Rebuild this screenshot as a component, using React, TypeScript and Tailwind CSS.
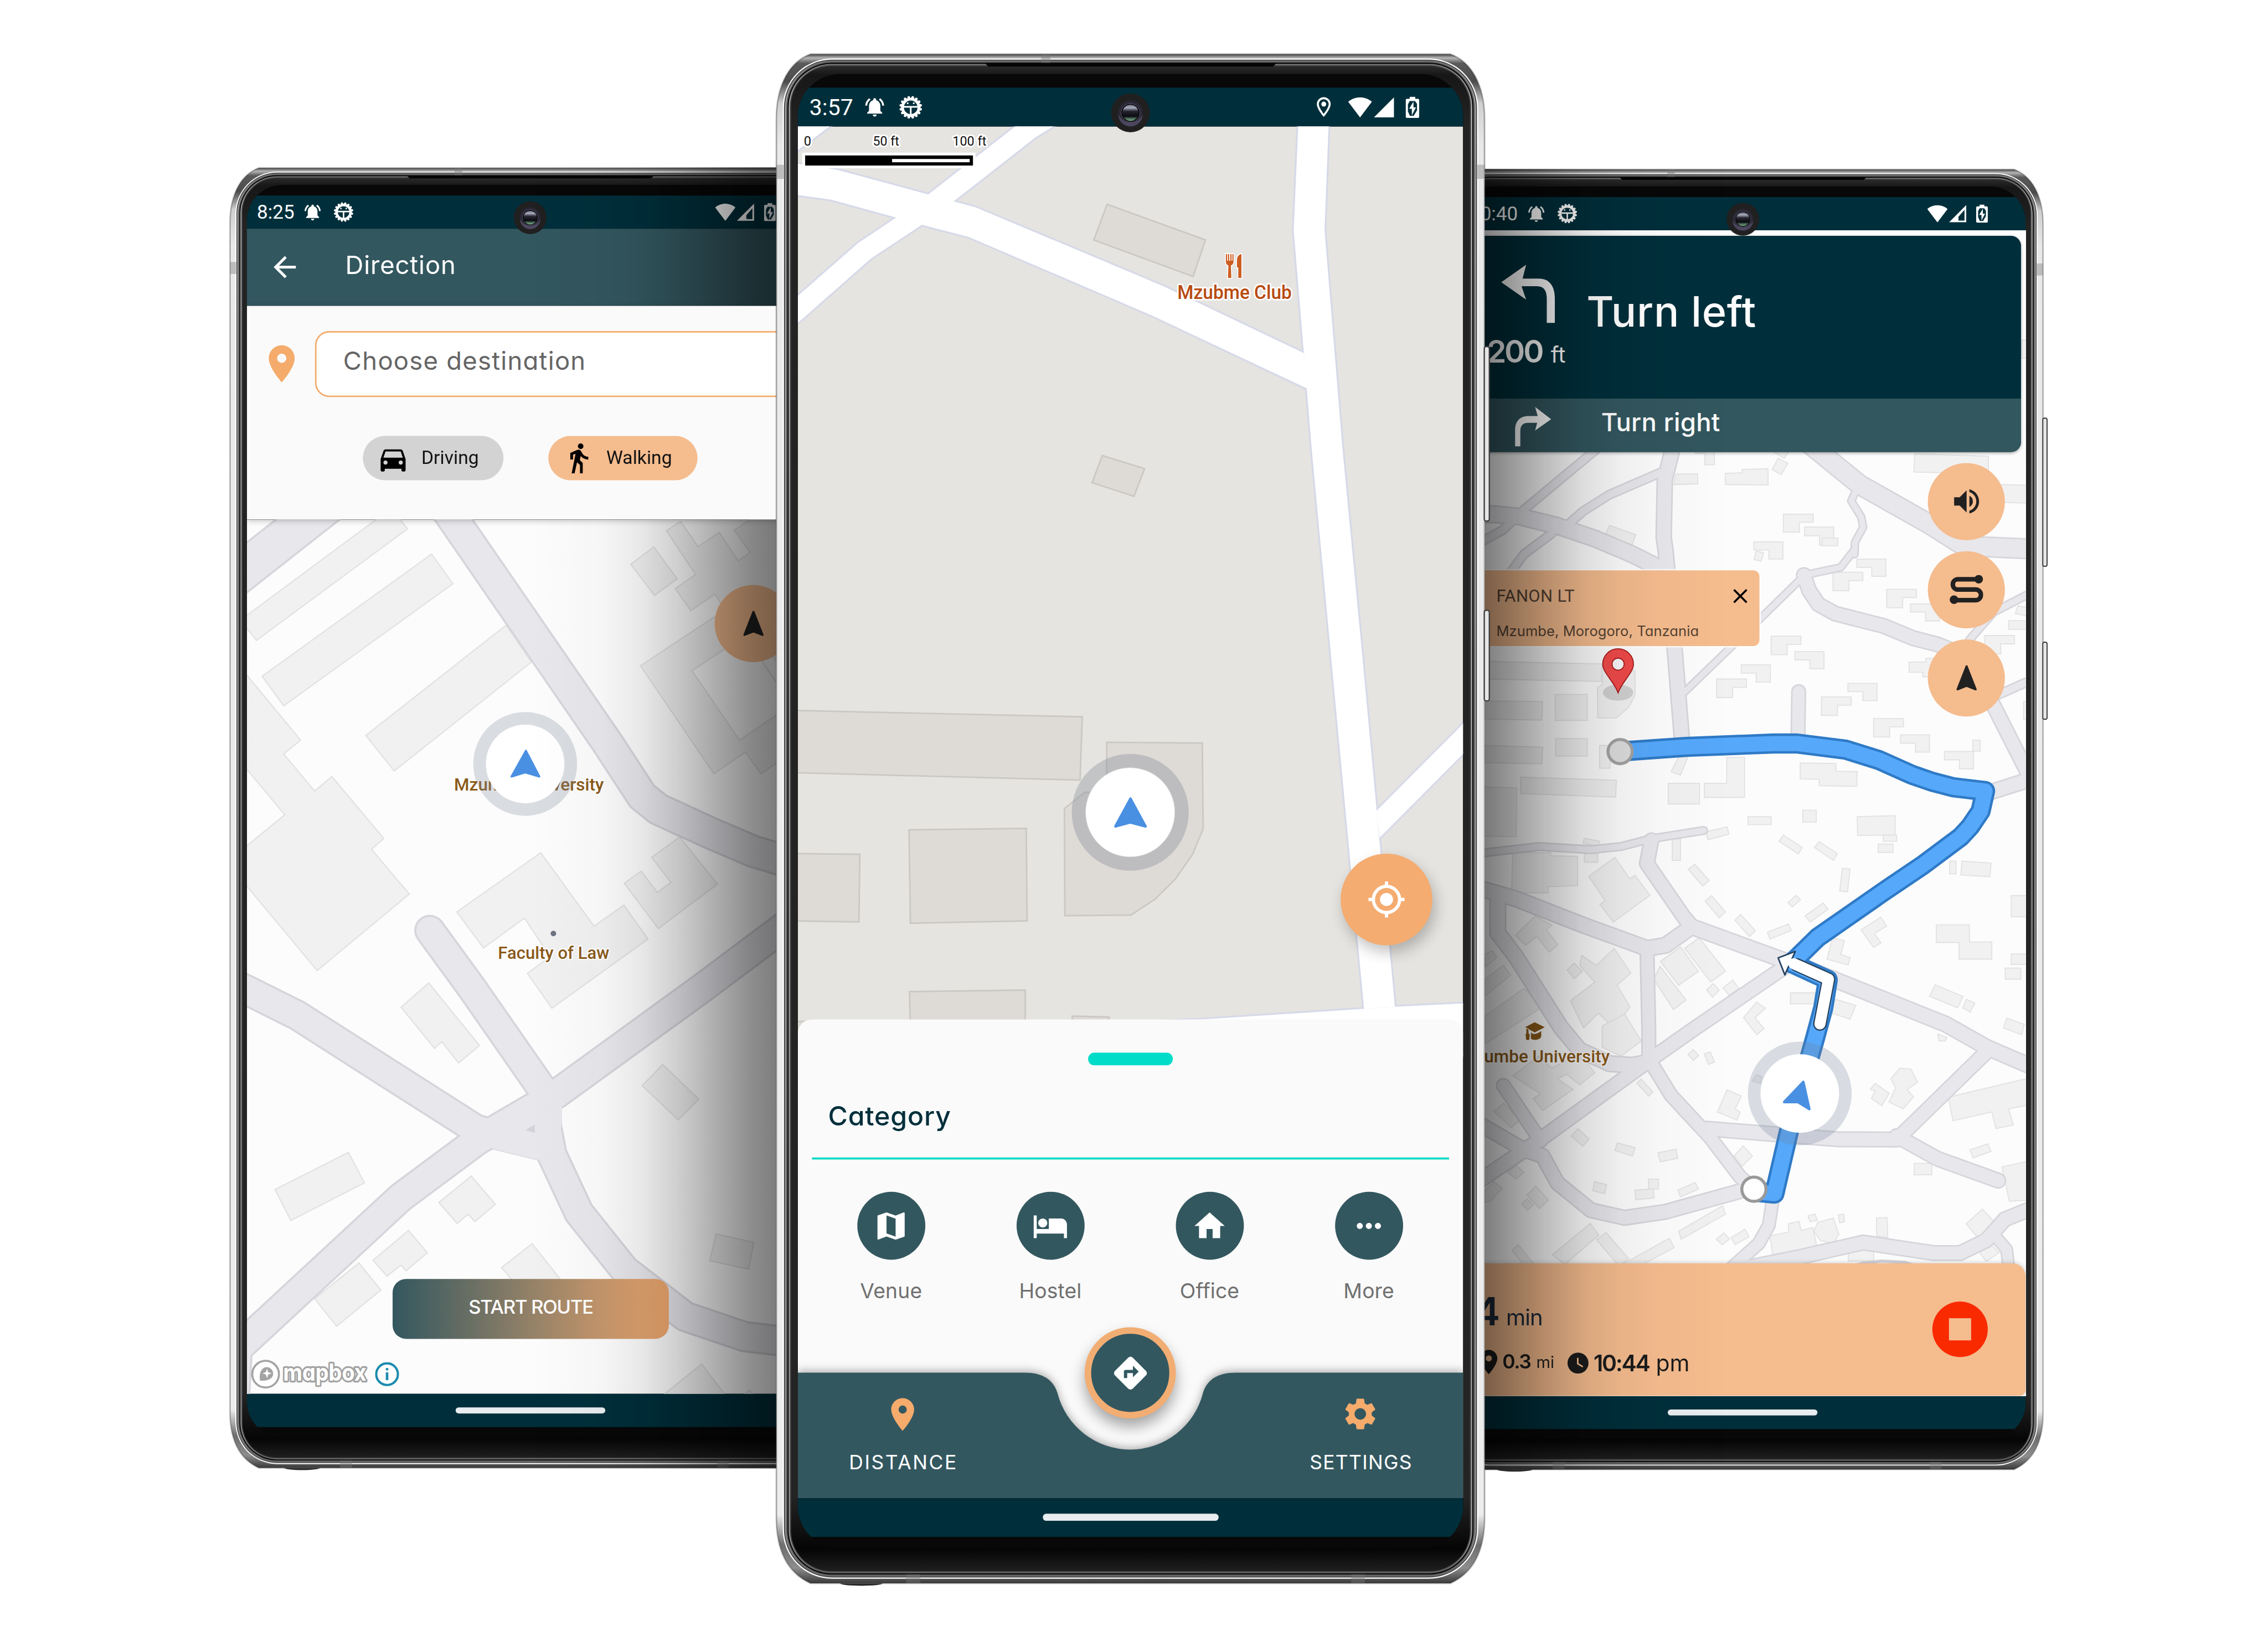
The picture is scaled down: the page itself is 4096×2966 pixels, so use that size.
import React from "react";
import {
  MdArrowBack,
  MdClose,
  MdDirections,
  MdDirectionsCar,
  MdDirectionsWalk,
  MdHome,
  MdHotel,
  MdLocationOn,
  MdMap,
  MdMoreHoriz,
  MdMyLocation,
  MdNotificationsActive,
  MdOutlineLocationOn,
  MdSettings,
  MdVolumeUp,
  MdWatchLater,
} from "react-icons/md";

/* ---------- map geometry helpers ---------- */

type Tile = { x: number; y: number; sx: number; sy: number };

// Each survey tile has its own origin and scale; at() projects flat x,y lists into map space.
const at = (t: Tile, ...v: number[]) => {
  const out: string[] = [];
  for (let i = 0; i < v.length; i += 2) {
    out.push(`${(t.x + v[i] * t.sx).toFixed(1)},${(t.y + v[i + 1] * t.sy).toFixed(1)}`);
  }
  return out.join(" ");
};

const A: Tile = { x: 440, y: 1020, sx: 0.7143, sy: 0.6122 };
const B: Tile = { x: 440, y: 1960, sx: 0.7143, sy: 0.625 };
const C: Tile = { x: 1530, y: 90, sx: 0.912, sy: 0.5102 };
const D: Tile = { x: 1530, y: 1300, sx: 0.912, sy: 0.5102 };
const G: Tile = { x: 2920, y: 320, sx: 0.7398, sy: 0.4974 };
const H: Tile = { x: 2920, y: 1080, sx: 0.7398, sy: 0.6122 };
const I: Tile = { x: 2920, y: 2000, sx: 0.7398, sy: 0.5995 };

type Road = { w: number; p: string };

function Roads({ roads, edge }: { roads: Road[]; edge: number }) {
  return (
    <g fill="none" strokeLinecap="round" strokeLinejoin="round">
      {roads.map((r, i) => (
        <polyline key={`c${i}`} points={r.p} stroke="#d5d5db" strokeWidth={r.w} />
      ))}
      {roads.map((r, i) => (
        <polyline key={`f${i}`} points={r.p} stroke="#e8e7ec" strokeWidth={r.w - edge * 2} />
      ))}
    </g>
  );
}

function Buildings({ items, fill, stroke, width }: { items: string[]; fill: string; stroke: string; width: number }) {
  return (
    <g fill={fill} stroke={stroke} strokeWidth={width}>
      {items.map((p, i) => (
        <polygon key={i} points={p} />
      ))}
    </g>
  );
}

/* ---------- direction screen map ---------- */

const campusRoads: Road[] = [
  { w: 66, p: at(A, 600, -55, 643, 17, 1070, 740, 1168, 915, 1213, 957, 1355, 1033, 1475, 1093, 1600, 1137) },
  { w: 82, p: at(A, 300, -38, 20, 219) },
  { w: 62, p: at(A, 578, 1350) + " " + at(B, 694, 0, 898, 335, 902, 440, 917, 530, 992, 714, 1120, 897, 1287, 1044, 1452, 1108, 1600, 1128) },
  { w: 62, p: at(A, 1620, 1287) + " " + at(B, 1336, 0, 930, 337, 710, 485, 497, 666, 40, 1150) },
  { w: 62, p: at(B, -10, -36, 70, 8, 210, 88, 706, 450, 905, 505) },
  { w: 62, p: at(B, 890, 380, 895, 500) },
  { w: 62, p: at(B, 42, 1168, 34, 1330) },
];

const campusBuildings: string[] = [
  at(A, 60, 337, 430, 17, 470, -20, 516, 48, 96, 410, 60, 355),
  at(A, 583, 130, 642, 226, 172, 622, 112, 526),
  at(A, 790, 360, 860, 480, 479, 833, 400, 718),
  at(A, 60, 509, 219, 733, 172, 778, 258, 898, 306, 851, 450, 1052, 416, 1087, 521, 1232, 265, 1480, 60, 1193, 60, 1085, 175, 975, 60, 814),
  at(A, 886, 1098, 1034, 1336, 1117, 1268, 1184, 1378, 917, 1602, 849, 1489, 912, 1435, 841, 1310, 727, 1407, 653, 1290),
  at(A, 1272, 1047, 1377, 1200, 1213, 1344, 1118, 1197, 1165, 1158, 1210, 1227, 1248, 1194, 1194, 1113),
  at(A, 1200, 107, 1265, 210, 1202, 264, 1136, 163),
  at(A, 1275, 24, 1323, 106, 1382, 60, 1435, 152, 1468, 125, 1424, 53, 1468, 17, 1560, -40, 1560, 330, 1410, 330, 1370, 260, 1303, 313, 1260, 242, 1316, 196, 1235, 54),
  at(A, 1163, 492, 1390, 317, 1600, 330, 1600, 760, 1498, 842, 1455, 772, 1367, 842),
  at(B, 575, -15, 716, 184, 658, 239, 611, 172, 591, 193, 498, 62),
  at(B, 1225, 244, 1325, 354, 1268, 420, 1168, 311),
  at(B, 352, 523, 396, 620, 192, 739, 148, 641),
  at(B, 693, 598, 760, 688, 703, 743, 684, 719, 654, 749, 603, 682),
  at(B, 519, 771, 571, 842, 512, 899, 498, 881, 459, 916, 420, 866),
  at(B, 381, 874, 442, 960, 319, 1075, 258, 988),
  at(B, 862, 813, 940, 925, 960, 960, 830, 960, 777, 889),
  at(B, 1373, 782, 1478, 809, 1464, 894, 1356, 867),
  at(B, 1333, 1195, 1430, 1340, 1165, 1350),
  at(B, 1466, 1278, 1520, 1350, 1390, 1350),
];

function CampusMap() {
  return (
    <svg className="block h-full w-full" viewBox="490 1031 1124 1735" preserveAspectRatio="none">
      <rect x="490" y="1031" width="1124" height="1735" fill="#fcfcfc" />
      <Buildings items={campusBuildings} fill="#f1f1f1" stroke="#e2e2e2" width={2.5} />
      <polygon points={at(A, 1306, 508, 1480, 375, 1600, 580, 1600, 605, 1438, 733)} fill="#fbfbfb" stroke="#e2e2e2" strokeWidth="2.5" />
      <polyline points={at(A, 1480, 440, 1600, 650)} fill="none" stroke="#e2e2e2" strokeWidth="2.5" />
      <Roads roads={campusRoads} edge={4} />
      <polygon points={at(B, 750, 425, 853, 346, 922, 296, 946, 385, 940, 500, 884, 548, 757, 513, 690, 470)} fill="#e8e7ec" />
      <polygon points={at(B, 843, 452, 869, 435, 870, 461)} fill="#d3d3da" />
      <g fontFamily="'Roboto', sans-serif" fontWeight="500" fontSize="34.500" fill="#8a5a1a" stroke="#ffffff" strokeWidth="5" paintOrder="stroke" strokeLinejoin="round">
        <text x="901" y="1569" textLength="297" lengthAdjust="spacingAndGlyphs">Mzumbe University</text>
        <text x="988" y="1902.500" textLength="221" lengthAdjust="spacingAndGlyphs">Faculty of Law</text>
      </g>
      <circle cx="1098" cy="1852.5" r="5.5" fill="#6f7482" />
      <circle cx="1042" cy="1516" r="103" fill="#7d8a9b" fillOpacity="0.28" />
      <circle cx="1042" cy="1516" r="78" fill="#ffffff" />
      <path d="M1043.5 1490 L1015 1541 L1042 1533 L1070 1541 Z" fill="#4a90e2" stroke="#4a90e2" strokeWidth="4" strokeLinejoin="round" />
    </svg>
  );
}

/* ---------- home screen map ---------- */

const clubRoads: string[] = [
  at(C, 40, 455, 145, 485, 342, 580, 397, 607, 445, 630, 855, 938, 1159, 1197, 1166, 1335, 830, 1052, 430, 745, 328, 698, 272, 670, 130, 600, 40, 578),
  at(C, 540, 303, 342, 580, 272, 670, 190, 768, 40, 1003, 40, 1108, 218, 828, 328, 698, 397, 607, 575, 358, 625, 303),
  at(C, 1147, 300, 1137, 720, 1159, 1197, 1176, 1568) + " " + at(D, 1218, 0, 1290, 1376, 1357, 1368, 1286, 0) + " " + at(C, 1243, 1568, 1204, 718, 1213, 300),
  at(D, 1540, 205, 1317, 606, 1324, 710, 1540, 322),
  at(D, 860, 1424, 950, 1416, 1290, 1376, 1357, 1368, 1540, 1352, 1540, 1560, 700, 1560),
  at(C, 40, 290, 146, 290, 40, 432),
];

const clubBuildings: string[] = [
  at(C, 731, 618, 945, 757, 918, 899, 702, 757),
  "2187,904 2271,930 2250,985 2167,958",
  at(D, 40, 215, 677, 240, 672, 486, 40, 457),
  at(D, 40, 772, 193, 775, 191, 1038, 40, 1034),
  at(D, 300, 680, 555, 674, 557, 1034, 303, 1043),
  at(D, 301, 1309, 553, 1303, 553, 1450, 303, 1450),
  at(D, 655, 1404, 735, 1408, 735, 1450, 655, 1450),
  at(D, 40, 1424, 90, 1426, 90, 1480, 40, 1480),
  at(D, 730, 339, 938, 342, 940, 675, 917, 775, 880, 870, 835, 950, 783, 1011, 639, 1014, 638, 597, 682, 534, 730, 536),
];

function ClubMap() {
  return (
    <svg className="absolute inset-0 h-full w-full" viewBox="1583 251 1320 2721" preserveAspectRatio="none">
      <rect x="1583" y="251" width="1320" height="2721" fill="#e5e4e0" />
      <Buildings items={clubBuildings} fill="#dedad6" stroke="#cbc8c4" width={3} />
      <g fill="#ffffff" stroke="#d6d9e8" strokeWidth="7">
        {clubRoads.map((p, i) => (
          <polygon key={i} points={p} />
        ))}
      </g>
      <g fill="#ffffff">
        {clubRoads.map((p, i) => (
          <polygon key={i} points={p} />
        ))}
      </g>
      <g fontFamily="'Roboto', sans-serif" fontSize="26" fill="#111111" stroke="#ffffff" strokeWidth="7" paintOrder="stroke" strokeLinejoin="round">
        <text x="1595" y="289">0</text>
        <text x="1732" y="289" textLength="52" lengthAdjust="spacingAndGlyphs">50 ft</text>
        <text x="1890" y="289" textLength="67" lengthAdjust="spacingAndGlyphs">100 ft</text>
      </g>
      <rect x="1591.5" y="303" width="344" height="31" fill="#ffffff" />
      <rect x="1597.5" y="308.5" width="333" height="20" fill="#000000" />
      <rect x="1770" y="315.5" width="154" height="6.5" fill="#ffffff" />
      <g transform="translate(2429 502) scale(2.2)" fill="#cd5c20" stroke="#ffffff" strokeWidth="1.6" paintOrder="stroke">
        <path d="M1.5 1 V7.5 C1.5 10 3 11 3.8 11.3 L3.4 22.5 H6.4 L6 11.3 C7 11 8.4 10 8.4 7.5 V1 H7.4 V7 H6.6 V1 H5.5 V7 H4.5 V1 H3.4 V7 H2.6 V1 Z" />
        <path d="M15.5 1 V22.5 H12.7 V13 H11.5 V7 C11.5 3 13.3 1.3 15.5 1 Z" />
      </g>
      <text x="2336" y="593" textLength="227" lengthAdjust="spacingAndGlyphs" fontFamily="'Roboto', sans-serif" fontWeight="500" fontSize="38" fill="#b84a10" stroke="#ffffff" strokeWidth="6" paintOrder="stroke" strokeLinejoin="round">
        Mzubme Club
      </text>
      <circle cx="2242.5" cy="1612" r="116" fill="#7d8893" fillOpacity="0.34" />
      <circle cx="2242.5" cy="1612" r="88.5" fill="#ffffff" stroke="#d9d9d9" strokeWidth="1" />
      <path d="M2243 1585 L2213 1640 L2242.5 1632 L2273 1640 Z" fill="#4a90e2" stroke="#4a90e2" strokeWidth="5" strokeLinejoin="round" />
    </svg>
  );
}

/* ---------- navigation screen map ---------- */

const townRoads: Road[] = [
  { w: 33, p: at(G, 545, 1100, 535, 1170, 518, 1270, 515, 1500) + " " + at(H, 520, 20, 545, 350, 565, 650) },
  { w: 20, p: at(G, 510, 1240, 370, 1330, 300, 1395, 250, 1460) },
  { w: 20, p: at(G, 350, 1130, 140, 1390, 85, 1470, 0, 1540) },
  { w: 36, p: at(G, -20, 1415, 60, 1408, 130, 1418, 230, 1455, 330, 1505, 430, 1568) + " " + at(H, 500, 75) },
  { w: 20, p: at(G, 215, 1485, 140, 1568) + " " + at(H, 108, 85) },
  { w: 42, p: at(G, 900, 1120, 1040, 1290, 1230, 1450, 1320, 1535, 1520, 1548) },
  { w: 17, p: at(G, 1035, 1300, 1018, 1355, 1045, 1420, 1050, 1460, 1028, 1520, 1027, 1568) + " " + at(H, 1025, 20, 990, 75, 893, 100) },
  { w: 32, p: at(H, 891, 100, 905, 150, 930, 195, 975, 225, 1105, 265, 1185, 305, 1250, 325, 1340, 370, 1390, 500, 1495, 750) },
  { w: 17, p: at(H, 885, 110, 775, 240, 690, 340, 570, 480) },
  { w: 30, p: at(H, 877, 478, 875, 640) },
  { w: 33, p: at(H, 1375, 810, 1530, 750) },
  { w: 18, p: at(H, 1335, 310, 1400, 220, 1520, 145) },
  { w: 20, p: at(H, 1400, 495, 1520, 430) },
  { w: 18, p: at(H, -20, 1005, 35, 1000, 180, 980, 320, 990, 400, 980, 480, 955, 622, 928) },
  { w: 32, p: at(H, 482, 960, 470, 1035, 570, 1210, 590, 1238) },
  { w: 34, p: at(H, -20, 1110, 35, 1120, 120, 1150, 300, 1235, 470, 1310, 520, 1300, 590, 1240, 840, 1350, 960, 1405, 1270, 1555) + " " + at(I, 1380, 130, 1530, 210) },
  { w: 30, p: at(H, 470, 1310, 475, 1568) + " " + at(I, 475, 170) },
  { w: 32, p: at(H, 840, 1370, 600, 1568) + " " + at(I, 475, 175, 190, 430, 0, 590) },
  { w: 34, p: at(H, 70, 1140, 70, 1260, 120, 1340, 240, 1568) + " " + at(I, 290, 140, 370, 185, 430, 190, 475, 180) },
  { w: 30, p: at(I, 480, 180, 535, 290, 640, 430, 720, 560, 757, 600) },
  { w: 32, p: at(I, 630, 400, 880, 425, 980, 435, 1140, 436, 1390, 135) },
  { w: 32, p: at(I, 1140, 425, 1250, 500, 1412, 572) },
  { w: 30, p: at(I, 85, 257, 185, 440) },
  { w: 32, p: at(I, -20, 355, 140, 470, 190, 490, 230, 580, 320, 670, 410, 695, 520, 675, 740, 600) },
  { w: 28, p: at(I, 808, 630, 797, 720, 770, 780, 680, 880) },
  { w: 32, p: at(I, 700, 870, 880, 825, 1050, 777, 1240, 812, 1310, 812, 1380, 770, 1430, 700, 1530, 650) },
  { w: 26, p: at(I, 1400, 750, 1435, 800, 1442, 880) },
];

// L-shaped houses, with the wing at the upper right or at the lower right.
const ell = (t: Tile, x: number, y: number, k = 1) =>
  at(t, x, y, x + 80, y, x + 80, y + 27 * k, x + 43, y + 27 * k, x + 43, y + 60 * k, x, y + 60 * k);
const ellFlip = (t: Tile, x: number, y: number, k = 1) =>
  at(t, x, y, x + 78, y, x + 78, y + 56 * k, x + 40, y + 56 * k, x + 40, y + 27 * k, x, y + 27 * k);
const box = (t: Tile, x: number, y: number, w: number, h: number) => at(t, x, y, x + w, y, x + w, y + h, x, y + h);

const townBuildings: string[] = [
  ell(H, 657, 437), ell(H, 803, 298), ell(H, 969, 91), ell(H, 938, 495), ell(H, 1078, 565), ell(H, 1113, 146), ell(H, 1376, 296),
  ellFlip(H, 723, 391), ellFlip(H, 867, 348), ellFlip(H, 1009, 451), ellFlip(H, 1150, 618), ellFlip(H, 1268, 672), ellFlip(H, 1033, 48), ellFlip(H, 1177, 193), ellFlip(H, 757, -8),
  ell(G, 836, 1408, 1.2), ellFlip(G, 893, 1459, 1.3),
  at(G, 600, 1140, 651, 1140, 651, 1211, 625, 1211, 625, 1166, 600, 1166),
  at(G, 680, 1245, 725, 1243, 725, 1230, 795, 1227, 795, 1292, 680, 1290),
  at(G, 822, 1185, 848, 1205, 830, 1250, 806, 1230), at(G, 810, 1160, 835, 1130, 850, 1160, 838, 1185),
  at(G, 548, 1248, 606, 1247, 606, 1287, 542, 1290),
  at(G, 1188, 1167, 1386, 1177, 1386, 1247, 1186, 1240), at(G, 1410, 1290, 1520, 1293, 1520, 1366, 1410, 1360),
  at(G, 370, 1453, 440, 1490, 430, 1531, 358, 1492), box(G, 1474, 714, 40, 72),
  at(H, 763, 22, 783, 28, 776, 55, 757, 50), at(H, 1465, 200, 1520, 210, 1520, 240, 1458, 225), box(H, 1440, 248, 80, 28),
  box(H, 940, -20, 42, 25), box(H, 1480, 510, 40, 58),
  at(H, 1173, 382, 1218, 382, 1218, 370, 1260, 370, 1260, 430, 1210, 430, 1210, 415, 1173, 415),
  at(H, 35, 380, 350, 388, 348, 445, 35, 437), at(H, 35, 508, 190, 510, 188, 570, 35, 567), box(H, 224, 487, 86, 84),
  at(H, 350, 400, 438, 410, 438, 490, 420, 530, 388, 563, 338, 563, 337, 465, 350, 455), box(H, 225, 630, 85, 57),
  at(H, 35, 652, 190, 658, 188, 712, 35, 708), box(H, 343, 652, 28, 74), at(H, 132, 755, 388, 765, 386, 820, 131, 808),
  at(H, 0, 786, 121, 790, 119, 948, 0, 945), at(H, 555, 690, 580, 690, 560, 748, 535, 738), box(H, 527, 775, 84, 67),
  at(H, 684, 691, 732, 691, 732, 821, 624, 821, 624, 775, 684, 775),
  at(H, 881, 709, 977, 711, 977, 736, 1034, 737, 1033, 785, 932, 783, 932, 762, 881, 761),
  box(H, 741, 883, 62, 26), at(H, 628, 932, 685, 916, 690, 940, 634, 958), box(H, 888, 862, 36, 39),
  at(H, 1034, 883, 1136, 880, 1136, 943, 1035, 944), box(H, 1104, 943, 36, 20), box(H, 1090, 972, 40, 27),
  at(H, 836, 943, 887, 983, 876, 1004, 824, 963), at(H, 932, 964, 981, 1003, 970, 1025, 919, 983), box(H, 538, 955, 22, 70),
  at(H, 598, 1037, 637, 1090, 620, 1108, 581, 1054), at(H, 643, 1139, 681, 1192, 664, 1211, 626, 1157), at(H, 721, 1200, 761, 1253, 745, 1272, 706, 1219),
  at(H, 994, 1051, 1015, 1053, 1008, 1127, 987, 1124), at(H, 870, 1138, 882, 1152, 860, 1176, 848, 1162),
  at(H, 943, 1163, 956, 1183, 908, 1225, 894, 1205), at(H, 850, 1231, 857, 1252, 800, 1280, 793, 1258),
  at(H, 1097, 1209, 1113, 1238, 1080, 1262, 1098, 1292, 1078, 1307, 1044, 1250),
  box(H, 1282, 1027, 17, 42), at(H, 1315, 1027, 1393, 1034, 1390, 1078, 1312, 1072), box(H, 1447, 1139, 60, 69),
  at(H, 1246, 1234, 1335, 1234, 1335, 1289, 1395, 1289, 1395, 1345, 1307, 1345, 1307, 1291, 1246, 1291),
  box(H, 1447, 1328, 60, 34), box(H, 1431, 1374, 42, 36), at(H, 1243, 1428, 1318, 1466, 1303, 1503, 1228, 1465),
  at(H, 1327, 1475, 1350, 1488, 1337, 1517, 1317, 1503), at(H, 968, 1276, 1000, 1285, 990, 1330, 1015, 1340, 1010, 1364, 953, 1345),
  box(H, 855, 1454, 66, 36), at(H, 975, 1475, 1030, 1495, 1015, 1540, 965, 1520), box(H, 1344, 635, 20, 36),
  at(H, 110, 1000, 212, 1000, 212, 1010, 284, 1012, 284, 1107, 205, 1110, 205, 1130, 107, 1130),
  at(H, 302, 953, 343, 963, 340, 978, 299, 970), box(H, 302, 1003, 36, 28),
  at(H, 384, 1015, 424, 1085, 438, 1073, 478, 1138, 380, 1225, 344, 1168, 358, 1155, 314, 1077),
  at(H, 170, 1205, 215, 1235, 200, 1250, 231, 1298, 208, 1323, 175, 1272, 145, 1300, 117, 1268),
  at(H, 295, 1333, 335, 1365, 382, 1310, 427, 1390, 390, 1430, 425, 1500, 380, 1568, 340, 1520, 300, 1568, 265, 1480, 330, 1420, 290, 1365),
  at(H, 275, 1358, 297, 1385, 275, 1408, 256, 1380),
  at(H, 610, 1276, 681, 1384, 641, 1419, 571, 1310), at(H, 560, 1305, 608, 1385, 555, 1430, 506, 1352), at(H, 505, 1368, 575, 1478, 541, 1508, 488, 1410),
  at(H, 648, 1424, 664, 1446, 646, 1468, 630, 1445), at(H, 700, 1413, 717, 1440, 690, 1462, 674, 1438),
  at(H, 764, 1484, 788, 1504, 760, 1535, 784, 1570, 765, 1590, 729, 1535),
  at(H, 35, 1330, 55, 1318, 68, 1340, 35, 1372), at(H, 35, 1410, 85, 1365, 105, 1397, 35, 1465), at(H, 35, 1530, 140, 1440, 190, 1500, 35, 1620),
  at(H, 1435, 1536, 1482, 1556, 1475, 1590, 1426, 1568),
  at(I, 350, 60, 410, 20, 455, 110, 400, 160, 350, 130), at(I, 594, 138, 609, 158, 595, 174, 580, 155), at(I, 640, 146, 651, 180, 635, 187, 624, 153),
  at(I, 110, 225, 180, 160, 215, 200, 290, 150, 330, 215, 290, 255, 255, 220, 230, 235, 272, 270, 190, 340, 165, 300, 185, 285),
  at(I, 454, 236, 486, 278, 475, 292, 443, 250), at(I, 685, 271, 723, 292, 707, 335, 720, 345, 712, 372, 659, 345),
  at(I, 86, 315, 128, 372, 106, 397, 60, 343), at(I, 285, 400, 315, 434, 298, 458, 267, 425), at(I, 391, 447, 438, 463, 431, 491, 384, 472),
  at(I, 499, 480, 548, 468, 553, 498, 506, 510), at(I, 728, 457, 753, 490, 725, 525, 704, 490),
  at(I, 329, 576, 362, 585, 357, 615, 325, 606), box(I, 474, 567, 27, 33), at(I, 438, 604, 487, 599, 489, 630, 440, 635),
  at(I, 553, 603, 600, 578, 608, 600, 560, 626), at(I, 172, 590, 206, 636, 182, 665, 148, 620), at(I, 148, 632, 165, 652, 150, 670, 134, 650),
  at(I, 35, 605, 60, 575, 82, 598, 50, 640, 35, 645), at(I, 120, 522, 140, 545, 118, 567, 96, 545),
  at(I, 673, 655, 681, 683, 562, 766, 555, 740), at(I, 676, 745, 692, 765, 672, 784, 656, 766), at(I, 733, 733, 744, 758, 706, 784, 696, 761),
  at(I, 318, 714, 341, 752, 250, 850, 216, 818), at(I, 360, 744, 421, 830, 395, 855, 335, 768), at(I, 530, 763, 543, 794, 440, 862, 410, 845), at(I, 125, 785, 175, 860, 150, 870, 108, 802),
  at(I, 1148, 200, 1178, 203, 1196, 246, 1168, 270, 1185, 295, 1157, 335, 1119, 312, 1137, 265, 1124, 235), at(I, 1082, 250, 1120, 283, 1100, 324, 1072, 300, 1082, 275, 1069, 270),
  at(I, 1278, 296, 1520, 225, 1520, 315, 1440, 335, 1453, 388, 1406, 400, 1395, 345, 1291, 374), at(I, 1384, 450, 1393, 475, 1345, 497, 1336, 470),
  box(I, 1187, 515, 47, 38), at(I, 1422, 527, 1520, 500, 1520, 635, 1442, 640), at(I, 1370, 666, 1410, 720, 1360, 765, 1326, 715),
  at(I, 800, 755, 850, 742, 850, 715, 878, 707, 884, 737, 915, 727, 925, 785, 870, 810, 808, 825),
  at(I, 928, 710, 970, 696, 985, 750, 970, 780, 935, 770, 918, 740), at(I, 902, 688, 921, 683, 927, 704, 907, 708), at(I, 983, 686, 998, 683, 1000, 709, 987, 712),
  at(I, 1086, 696, 1114, 694, 1116, 760, 1086, 755), box(I, 1010, 800, 68, 38), at(I, 1250, 87, 1275, 98, 1270, 110, 1253, 110),
  at(I, 1390, 780, 1415, 810, 1380, 840, 1362, 810), at(I, 764, 222, 778, 228, 775, 250, 752, 242),
];

const routeTop = at(H, 398, 672, 575, 657, 810, 646, 872, 646, 1003, 666, 1093, 700, 1182, 748, 1235, 770, 1292, 788, 1377, 800, 1365, 865, 1337, 915, 1312, 948, 1210, 1040, 1100, 1130, 928, 1275, 858, 1358, 955, 1412);
const route = routeTop + " " + at(I, 943, 0, 921, 100, 851, 408, 812, 615, 770, 610);

function TownMap() {
  return (
    <svg className="absolute inset-0 h-full w-full" viewBox="2896 457 1123 2313" preserveAspectRatio="none">
      <rect x="2896" y="457" width="1124" height="2313" fill="#fcfcfc" />
      <Buildings items={townBuildings} fill="#f1f1f1" stroke="#e2e2e2" width={2} />
      <Roads roads={townRoads} edge={3} />
      <polyline points={at(I, 1000, 862, 1050, 845, 1100, 838, 1160, 842, 1210, 860)} fill="none" stroke="#d5d5db" strokeWidth="6" />
      <polyline points={route} fill="none" stroke="#2f7ac6" strokeWidth="40" strokeLinejoin="round" />
      <polyline points={route} fill="none" stroke="#56a8fb" strokeWidth="30" strokeLinejoin="round" />
      <g strokeLinejoin="round" strokeLinecap="round" fill="none">
        <polyline points={at(H, 872, 1364, 957, 1410, 934, 1555)} stroke="#24425f" strokeWidth="27" />
        <polygon points={at(H, 822, 1341, 868, 1320, 840, 1396)} fill="#ffffff" stroke="#24425f" strokeWidth="3" />
        <polyline points={at(H, 864, 1360, 957, 1410, 934, 1555)} stroke="#ffffff" strokeWidth="22" />
      </g>
      <circle cx="3214.5" cy="1491.5" r="24" fill="#dcdcdc" stroke="#a2a2a2" strokeWidth="6" />
      <circle cx="3480" cy="2360" r="24" fill="#ffffff" stroke="#999999" strokeWidth="6" />
      <circle cx="3571" cy="2170" r="103" fill="#6f7f95" fillOpacity="0.26" />
      <circle cx="3571" cy="2170" r="78" fill="#ffffff" />
      <path d="M3578 2147 L3540 2187 L3567 2187 L3590 2201 Z" fill="#4a90e2" stroke="#4a90e2" strokeWidth="5" strokeLinejoin="round" />
      <ellipse cx="3210.5" cy="1374.5" rx="30" ry="16" fill="#000000" fillOpacity="0.13" />
      <path d="M3210.5 1375 C3203 1353 3180 1335 3180 1318 A30.5 30.5 0 0 1 3241 1318 C3241 1335 3218 1353 3210.5 1375 Z" fill="#f04a4a" stroke="#a81d1d" strokeWidth="2" />
      <circle cx="3210.5" cy="1318" r="12" fill="#f7f7f7" stroke="#a81d1d" strokeWidth="2" />
      <g fill="#8a5a1a" stroke="#ffffff" strokeOpacity="0.6" strokeWidth="3" paintOrder="stroke">
        <path d="M3045 2028.500 L3065 2038.500 L3045 2049 L3026 2038.500 Z" />
        <path d="M3037.500 2048 C3040 2053 3048 2054 3058 2046 V2057 C3056 2065 3040 2065 3037.500 2061 Z" />
        <path d="M3028.500 2041 L3032.500 2043 L3033 2051 C3037 2054 3034 2057 3034.500 2063 C3031 2065 3028 2064 3027.500 2061 C3029 2057 3025 2054 3028.500 2051 Z" />
      </g>
      <text x="2897" y="2108" textLength="297" lengthAdjust="spacingAndGlyphs" fontFamily="'Roboto', sans-serif" fontWeight="500" fontSize="35" fill="#8a5a1a" stroke="#ffffff" strokeOpacity="0.7" strokeWidth="4" paintOrder="stroke">
        Mzumbe University
      </text>
    </svg>
  );
}

/* ---------- device ---------- */

const OUTLINE =
  "M68 1.500 H1338 C1378 16 1405.500 60 1405.500 130 V2907 C1405.500 2970 1384 3015 1338 3036 H68 C22 3015 0.500 2970 0.500 2907 V130 C0.500 60 28 16 68 1.500 Z";

function DeviceFrame({ id }: { id: string }) {
  const ring = (dx: number, dy: number, r: number, fill: string) => (
    <rect x={dx} y={dy} width={1406 - dx * 2} height={3037 - dy * 2} rx={r} fill={fill} />
  );
  return (
    <svg className="absolute inset-0 h-full w-full overflow-visible" viewBox="0 0 1406 3037" preserveAspectRatio="none">
      <defs>
        <linearGradient id={`${id}-metal`} x1="0" y1="0" x2="0" y2="1">
          <stop offset="0" stopColor="#4a4a4a" />
          <stop offset="0.0025" stopColor="#b5b5b5" />
          <stop offset="0.006" stopColor="#5a5a5a" />
          <stop offset="0.018" stopColor="#4c4c4c" />
          <stop offset="0.032" stopColor="#d0d0d0" />
          <stop offset="0.06" stopColor="#e9e9e9" />
          <stop offset="0.955" stopColor="#ededed" />
          <stop offset="0.975" stopColor="#6e6e6e" />
          <stop offset="0.99" stopColor="#8d8d8d" />
          <stop offset="1" stopColor="#3a3a3a" />
        </linearGradient>
        <linearGradient id={`${id}-rim`} x1="0" y1="0" x2="0" y2="1">
          <stop offset="0" stopColor="#7c7c7c" />
          <stop offset="0.03" stopColor="#c4c4c4" />
          <stop offset="0.97" stopColor="#a9a9a9" />
          <stop offset="1" stopColor="#6c6c6c" />
        </linearGradient>
        <linearGradient id={`${id}-bezel`} x1="0" y1="0" x2="0" y2="1">
          <stop offset="0" stopColor="#2b2b2b" />
          <stop offset="0.006" stopColor="#171717" />
          <stop offset="0.04" stopColor="#232323" />
          <stop offset="0.95" stopColor="#242424" />
          <stop offset="0.985" stopColor="#050505" />
          <stop offset="1" stopColor="#1f1f1f" />
        </linearGradient>
      </defs>
      <ellipse cx="169" cy="3036" rx="42" ry="5" fill="#2c2c2c" />
      <path d={OUTLINE} fill={`url(#${id}-metal)`} stroke="#8b8b8b" strokeWidth="1" />
      <path d={OUTLINE} fill="none" stroke="#000000" strokeOpacity="0.15" strokeWidth="4" />
      {ring(13, 10, 98, "#ffffff")}
      {ring(15.5, 12.5, 95, "#4b4b4b")}
      {ring(18, 14.5, 93, `url(#${id}-rim)`)}
      {ring(19.5, 16, 92, "#5e5e5e")}
      {ring(22.5, 18.5, 88, "#060606")}
      {ring(25, 21, 85, `url(#${id}-rim)`)}
      {ring(27, 23, 83, "#4a4a4a")}
      {ring(29.5, 25, 80, `url(#${id}-bezel)`)}
      <path d="M414 19 H993 L986 26 H421 Z" fill="#050505" />
      <g fill="#777777" fillOpacity="0.4">
        <rect x="526" y="1" width="18" height="18" />
        <rect x="0" y="221" width="21" height="28" />
        <rect x="1385" y="221" width="21" height="28" />
        <rect x="258" y="3018" width="28" height="18" />
        <rect x="1141" y="3018" width="27" height="18" />
      </g>
      <g fill="#e6e6e6" stroke="#3b3b3b" strokeWidth="2.5">
        <rect x="1405" y="582" width="10" height="346" rx="4" />
        <rect x="1405" y="1105" width="10" height="180" rx="4" />
      </g>
    </svg>
  );
}

function Camera({ id, className }: { id: string; className: string }) {
  return (
    <svg className={className} viewBox="0 0 78 78">
      <defs>
        <linearGradient id={`${id}-lens`} x1="0" y1="0" x2="0" y2="1">
          <stop offset="0" stopColor="#6f7186" />
          <stop offset="0.18" stopColor="#a9abbd" />
          <stop offset="0.4" stopColor="#262531" />
          <stop offset="0.72" stopColor="#0b0b10" />
          <stop offset="0.82" stopColor="#3f5c4e" />
          <stop offset="1" stopColor="#7fae8c" />
        </linearGradient>
      </defs>
      <circle cx="39" cy="39" r="38.5" fill="#202020" />
      <circle cx="39" cy="39" r="24.5" fill="#2a2635" />
      <path d="M15 42 A24 24 0 0 0 63 42 A26 26 0 0 1 15 42 Z" fill="#4d4660" />
      <circle cx="39" cy="39" r="19" fill="#5f6072" />
      <circle cx="39" cy="39" r="18" fill="#050507" />
      <circle cx="39" cy="39" r="16" fill={`url(#${id}-lens)`} />
    </svg>
  );
}

function DebugGear() {
  return (
    <svg className="ml-[26px] h-[46px] w-[46px]" viewBox="-23 -23 46 46">
      <g fill="#ffffff">
        {Array.from({ length: 16 }, (_, i) => (
          <path key={i} d="M-4 -17 L-1.6 -22.5 H1.6 L4 -17 Z" transform={`rotate(${i * 22.5 + 11.25})`} />
        ))}
      </g>
      <circle r="15.8" fill="none" stroke="#ffffff" strokeWidth="4.6" />
      <path d="M-15 -1 H15 M0 0 V15" stroke="#ffffff" strokeWidth="3.4" />
      <circle cx="-6" cy="-8" r="1.8" fill="#ffffff" />
      <circle cx="6" cy="-8" r="1.8" fill="#ffffff" />
    </svg>
  );
}

function StatusBar({ time, className, location, fullSignal }: { time: string; className: string; location?: boolean; fullSignal?: boolean }) {
  return (
    <div className={`flex h-[77px] shrink-0 items-center bg-[#002f3b] pr-[87px] pl-[23px] text-white ${className}`}>
      <span className="font-['Roboto'] text-[45px] leading-none">{time}</span>
      <MdNotificationsActive className="ml-[20px] h-[45px] w-[45px]" />
      <DebugGear />
      <span className="grow" />
      {location && <MdOutlineLocationOn className="mr-[25px] h-[47px] w-[47px]" />}
      <svg className="h-[40px] w-[47px]" viewBox="0 0 47 40">
        <path d="M23.5 40 L0 9 C13 -2.5 34 -2.5 47 9 Z" fill="#ffffff" />
      </svg>
      <svg className="ml-[4px] h-[40px] w-[40px]" viewBox="0 0 40 40">
        <path d="M40 0 V40 H0 Z" fill="#ffffff" />
        {!fullSignal && <path d="M36 11 V36 H22 V27 Z" fill="#002f3b" />}
      </svg>
      <svg className="ml-[23px] h-[42px] w-[27px]" viewBox="0 0 27 42">
        <path d="M8 0 H19 V4 H24 Q27 4 27 7 V39 Q27 42 24 42 H3 Q0 42 0 39 V7 Q0 4 3 4 H8 Z" fill="#ffffff" />
        <path d="M8 8.500 H18.500 L22.500 14 V27 L16 38 H8.500 L4.500 29 V15 Z" fill="#002f3b" />
        <path d="M15.500 9.500 L7 24 H12.300 V37 L20.500 21 H15.500 Z" fill="#ffffff" />
      </svg>
    </div>
  );
}

function NavPointer({ className }: { className: string }) {
  return (
    <svg className={className} viewBox="0 0 42 51">
      <path d="M21 2 L39 48 L21 41 L3 48 Z" fill="#212121" stroke="#212121" strokeWidth="4" strokeLinejoin="round" />
    </svg>
  );
}

/* ---------- direction screen ---------- */

function DirectionScreen() {
  return (
    <div className="mt-[35px] ml-[34px] flex h-[2485px] w-[1124px] flex-col overflow-hidden rounded-[70px] bg-[#080808] pt-[21px]">
      <StatusBar time="8:25" className="[zoom:0.857]" />
      <header className="flex h-[153px] shrink-0 items-center bg-[#33575f] pl-[42px] text-white">
        <MdArrowBack className="h-[66px] w-[66px]" />
        <h1 className="ml-[87px] pb-[9px] text-[50px] leading-none font-normal tracking-[0.9px]">Direction</h1>
      </header>
      <div className="relative z-10 flex h-[424px] shrink-0 flex-col bg-[#fafafa] pt-[50px] shadow-[0_3px_12px_rgba(0,0,0,0.25)]">
        <div className="flex items-center pl-[25px]">
          <MdLocationOn className="h-[88px] w-[88px] text-[#f4ab6b]" />
          <div className="ml-[22px] flex h-[131px] w-[960px] items-center rounded-[28px] border-[3px] border-[#f4ab6b] bg-white pb-[12px] pl-[53px]">
            <span className="text-[50px] leading-none tracking-[1.3px] text-[#656565]">Choose destination</span>
          </div>
        </div>
        <div className="mt-[77px] flex gap-[89px] pl-[230px] font-['Roboto'] text-[37px] leading-none text-[#111111]">
          <div className="flex h-[88px] w-[279px] items-center rounded-full bg-[#d3d3d3] pl-[27px]">
            <MdDirectionsCar className="mt-[4px] h-[66px] w-[66px] text-black" />
            <span className="ml-[23px]">Driving</span>
          </div>
          <div className="flex h-[88px] w-[296px] items-center rounded-full bg-[#f5bc8e] pl-[27px]">
            <MdDirectionsWalk className="h-[66px] w-[66px] text-black" />
            <span className="ml-[22px]">Walking</span>
          </div>
        </div>
      </div>
      <div className="relative h-[1735px] shrink-0">
        <CampusMap />
        <div className="absolute top-[130px] left-[928px] flex h-[153px] w-[153px] items-center justify-center rounded-full bg-[#f5bc8e]">
          <NavPointer className="h-[51px] w-[42px]" />
        </div>
        <div className="absolute bottom-[109px] left-[289px] flex h-[119px] w-[548px] items-center justify-center rounded-[27px] bg-[linear-gradient(90deg,#33575f,#f4ab70)] pb-[9px]">
          <span className="text-[38px] leading-none font-medium tracking-[-1.4px] text-white">START ROUTE</span>
        </div>
        <div className="absolute bottom-[10px] left-[8px] flex items-center">
          <svg className="h-[58px] w-[240px] overflow-visible" viewBox="0 0 240 58">
            <circle cx="29" cy="29" r="26.5" fill="#ffffff" stroke="#a3a3a3" strokeWidth="4" />
            <path d="M18 42 C15 26 22 15 31 15 A13 13 0 0 1 44 28 C44 38 33 43 18 42 Z" fill="#a3a3a3" />
            <path d="M32 18 L34 25 L41 27.500 L34 30 L32 37 L29.500 30 L23 27.500 L29.500 25 Z" fill="#ffffff" />
            <text x="64" y="42" textLength="165" lengthAdjust="spacingAndGlyphs" fontFamily="Inter, sans-serif" fontWeight="700" fontSize="46" fill="#ffffff" stroke="#a3a3a3" strokeWidth="7" paintOrder="stroke" strokeLinejoin="round" className="[font-feature-settings:'cv11']">
              mapbox
            </text>
          </svg>
          <svg className="ml-[6px] h-[48px] w-[48px]" viewBox="0 0 48 48">
            <circle cx="24" cy="24" r="21.5" fill="#ffffff" stroke="#1a8aad" strokeWidth="4.500" />
            <path d="M24 20.500 V36 M24 12 V16.500" stroke="#1a8aad" strokeWidth="5" />
          </svg>
        </div>
      </div>
      <div className="flex h-[66px] shrink-0 items-center justify-center bg-[#002f3b]">
        <div className="h-[12px] w-[297px] rounded-full bg-[#e9edf0]" />
      </div>
    </div>
  );
}

/* ---------- home screen ---------- */

const categories = [
  { label: "Venue", Icon: MdMap },
  { label: "Hostel", Icon: MdHotel },
  { label: "Office", Icon: MdHome },
  { label: "More", Icon: MdMoreHoriz },
];

function HomeScreen() {
  return (
    <div className="mt-[41px] ml-[43px] flex h-[2926px] w-[1320px] flex-col overflow-hidden rounded-[84px] bg-[#080808] pt-[27px]">
      <StatusBar time="3:57" className="" location fullSignal />
      <div className="relative flex h-[2721px] shrink-0 flex-col justify-end">
        <ClubMap />
        <button className="absolute top-[1443px] right-[61px] flex h-[182px] w-[182px] items-center justify-center rounded-full bg-[#f4ac71] shadow-[6px_14px_28px_rgba(0,0,0,0.24)]">
          <MdMyLocation className="h-[78px] w-[78px] text-white" />
        </button>
        <div className="relative flex h-[949px] flex-col rounded-t-[28px] bg-[#fafafa] px-[28px] pt-[66px]">
          <div className="h-[25px] w-[168px] self-center rounded-[12px] bg-[#00dcc8]" />
          <h2 className="mt-[75px] ml-[32px] text-[53px] leading-none font-medium tracking-[0.9px] text-[#002f3b]">Category</h2>
          <div className="mt-[55px] h-[4px] bg-[#00dcc8]" />
          <div className="mt-[64px] mr-px -ml-px grid grid-cols-4">
            {categories.map(({ label, Icon }) => (
              <div key={label} className="flex flex-col items-center">
                <div className="flex h-[135px] w-[135px] items-center justify-center rounded-full bg-[#33575f]">
                  <Icon className="h-[72px] w-[72px] text-white" />
                </div>
                <span className="mt-[41px] text-[41px] leading-none tracking-[0.1px] text-[#707070]">{label}</span>
              </div>
            ))}
          </div>
          <nav className="absolute inset-x-0 bottom-0 flex h-[248px] justify-between px-[102px] pt-[44px] text-white">
            <svg className="absolute inset-0 h-full w-full overflow-visible drop-shadow-[0_-4px_8px_rgba(0,0,0,0.3)]" viewBox="0 0 1320 248" preserveAspectRatio="none">
              <path d="M0 0 H450 C486 0 507 14 515 40 A149 149 0 0 0 804 40 C812 14 833 0 869 0 H1320 V248 H0 Z" fill="#33575f" />
            </svg>
            <div className="relative flex w-[212px] flex-col items-center">
              <MdLocationOn className="h-[78px] w-[78px] text-[#f4ab6b]" />
              <span className="mt-[36px] ml-[3px] text-[39px] leading-none tracking-[2.8px]">DISTANCE</span>
            </div>
            <div className="relative flex w-[204px] flex-col items-center">
              <MdSettings className="h-[76px] w-[76px] text-[#f4ab6b]" />
              <span className="mt-[38px] ml-[3px] text-[39px] leading-none tracking-[1.4px]">SETTINGS</span>
            </div>
            <button className="absolute top-[-90px] left-[569px] flex h-[181px] w-[181px] items-center justify-center rounded-full border-[13px] border-[#f2ad73] bg-[#33575f] shadow-[0_16px_28px_rgba(0,0,0,0.35)]">
              <MdDirections className="h-[78px] w-[78px] text-white" />
            </button>
          </nav>
        </div>
      </div>
      <div className="flex h-[78px] shrink-0 items-center justify-center bg-[#002f3b]">
        <div className="h-[14px] w-[349px] rounded-full bg-[#e9edf0]" />
      </div>
    </div>
  );
}

/* ---------- navigation screen ---------- */

function NavigationScreen() {
  return (
    <div className="mt-[35px] ml-[34px] flex h-[2485px] w-[1123px] flex-col overflow-hidden rounded-[70px] bg-[#080808] pt-[21px]">
      <StatusBar time="10:40" className="[zoom:0.857]" />
      <div className="relative flex h-[2313px] shrink-0 flex-col">
        <TownMap />
        <div className="absolute inset-x-0 top-0 h-[40px] bg-white" />
        <section className="relative mx-[9px] mt-[11px] flex h-[429px] shrink-0 flex-col overflow-hidden rounded-[20px] bg-[#002f3b] text-white shadow-[0_2px_6px_rgba(0,0,0,0.3)]">
          <div className="flex h-[323px]">
            <div className="flex w-[243px] flex-col pt-[57px] pl-[45px]">
              <svg className="ml-[28px] h-[116px] w-[107px]" viewBox="2977 525 107 116">
                <path d="M2977.700 560 L3027 525.500 L3020 553 H3053 C3073 553 3084 568 3084 592 V641 H3068 V592 C3068 577 3062 568 3049 568 H3018 L3027 594.500 Z" fill="#ffffff" />
              </svg>
              <div className="mt-[26px] flex items-baseline leading-none">
                <span className="text-[62px] leading-none font-semibold tracking-[-3.5px]">200</span>
                <span className="ml-[17px] text-[44px] leading-none">ft</span>
              </div>
            </div>
            <h2 className="pt-[109px] text-[83px] leading-none font-medium tracking-[0.8px]">Turn left</h2>
          </div>
          <div className="flex h-[106px] bg-[#33575f]">
            <svg className="mt-[16px] ml-[101px] h-[79px] w-[72px]" viewBox="3006 807 72 79">
              <path d="M3077.600 832 L3045.800 807.500 L3051 825.500 H3033 C3015 825.500 3006 836 3006 855 V886 H3016.500 V856 C3016.500 845 3021 839 3032 839 H3050 L3045.800 854.500 Z" fill="#ffffff" />
            </svg>
            <span className="mt-[22px] ml-[99px] text-[50px] leading-none font-medium tracking-[0.3px]">Turn right</span>
          </div>
        </section>
        <div className="relative mt-[22px] mr-[41px] flex flex-col gap-[22px] self-end">
          <div className="flex h-[153px] w-[153px] items-center justify-center rounded-full bg-[#f5bc8e]">
            <MdVolumeUp className="h-[66px] w-[66px] text-[#212121]" />
          </div>
          <div className="flex h-[153px] w-[153px] items-center justify-center rounded-full bg-[#f5bc8e]">
            <svg className="h-[58px] w-[67px]" viewBox="3868 1142 67 58">
              <path d="M3925 1150.500 H3884 A10.300 10.300 0 0 0 3884 1171 H3920 A10.500 10.500 0 0 1 3920 1192 H3877" fill="none" stroke="#212121" strokeWidth="9" />
              <circle cx="3926" cy="1150.500" r="8.500" fill="#212121" />
              <circle cx="3877" cy="1191" r="8.500" fill="#212121" />
            </svg>
          </div>
          <div className="flex h-[153px] w-[153px] items-center justify-center rounded-full bg-[#f5bc8e]">
            <NavPointer className="h-[51px] w-[42px]" />
          </div>
        </div>
        <div className="absolute top-[675px] left-0 flex h-[150px] w-[595px] flex-col rounded-[12px] bg-[#f5bc8e] pt-[33px] pr-[14px] pl-[73px] text-[#544233] shadow-[0_0_0_3px_rgba(255,255,255,0.8)]">
          <div className="flex items-start justify-between">
            <span className="font-['Roboto'] text-[34px] leading-none tracking-[0.4px]">FANON LT</span>
            <MdClose className="-mt-[6px] h-[48px] w-[48px] text-black" />
          </div>
          <span className="mt-[31px] text-[28px] leading-none tracking-[0.1px]">Mzumbe, Morogoro, Tanzania</span>
        </div>
        <section className="relative mt-auto flex h-[263px] items-center justify-between rounded-tr-[26px] rounded-br-[12px] bg-[#f5bc8e] pr-[75px] pl-[29px] shadow-[0_-2px_8px_rgba(0,0,0,0.15)]">
          <div className="flex flex-col pt-[19px]">
            <div className="flex items-baseline text-[#1d2a3a]">
              <span className="text-[77px] leading-none font-semibold">4</span>
              <span className="ml-[12px] text-[44px] leading-none tracking-[-1px]">min</span>
            </div>
            <div className="mt-[33px] flex items-center text-[#1c1c1c]">
              <MdLocationOn className="-mr-[2px] h-[58px] w-[58px]" />
              <span className="pb-[2px] text-[39px] leading-none font-semibold tracking-[-1.6px]">0.3</span>
              <span className="ml-[11px] pt-[3px] text-[32px] leading-none">mi</span>
              <MdWatchLater className="mt-[4px] ml-[22px] h-[50px] w-[50px]" />
              <span className="ml-[6px] pt-[3px] text-[45px] leading-none font-semibold tracking-[-2.5px]">10:44</span>
              <span className="ml-[13px] pt-[3px] text-[45px] leading-none">pm</span>
            </div>
          </div>
          <button className="flex h-[110px] w-[110px] items-center justify-center rounded-full bg-[#fa2a00]">
            <span className="h-[44px] w-[44px] bg-[#f5bc8e]" />
          </button>
        </section>
      </div>
      <div className="flex h-[66px] shrink-0 items-center justify-center bg-[#002f3b]">
        <div className="h-[12px] w-[297px] rounded-full bg-[#e9edf0]" />
      </div>
    </div>
  );
}

/* ---------- page ---------- */

export default function App() {
  return (
    <div className="h-[2966px] w-[4096px] overflow-hidden bg-white">
      <main className="flex h-[3259px] w-[4500px] origin-top-left scale-[0.91022] items-start font-['Inter',sans-serif] [font-feature-settings:'cv11']">
        <div className="relative mt-[332px] ml-[456px] h-[2582px] w-[1192px] shrink-0">
          <DeviceFrame id="direction" />
          <div className="relative">
            <DirectionScreen />
          </div>
          <Camera id="direction" className="absolute top-[67px] left-[563px] h-[66px] w-[66px]" />
          <div className="absolute inset-y-0 left-[596px] w-[488px] bg-[linear-gradient(270deg,rgba(0,0,0,0.5)_0%,rgba(0,0,0,0.44)_10%,rgba(0,0,0,0.31)_25%,rgba(0,0,0,0.18)_40%,rgba(0,0,0,0.08)_55%,rgba(0,0,0,0.025)_71%,rgba(0,0,0,0)_100%)]" />
        </div>
        <div className="relative z-10 mt-[106px] -ml-[108px] h-[3037px] w-[1406px] shrink-0">
          <DeviceFrame id="home" />
          <div className="relative">
            <HomeScreen />
          </div>
          <Camera id="home" className="absolute top-[79px] left-[664px] h-[78px] w-[78px]" />
        </div>
        <div className="relative mt-[335px] -ml-[84px] h-[2582px] w-[1192px] shrink-0">
          <DeviceFrame id="navigation" />
          <div className="relative">
            <NavigationScreen />
          </div>
          <Camera id="navigation" className="absolute top-[67px] left-[563px] h-[66px] w-[66px]" />
          <div className="absolute inset-y-0 left-[84px] w-[488px] bg-[linear-gradient(90deg,rgba(0,0,0,0.5)_0%,rgba(0,0,0,0.4)_10%,rgba(0,0,0,0.25)_25%,rgba(0,0,0,0.12)_40%,rgba(0,0,0,0.05)_55%,rgba(0,0,0,0.02)_71%,rgba(0,0,0,0)_100%)]" />
        </div>
      </main>
    </div>
  );
}
